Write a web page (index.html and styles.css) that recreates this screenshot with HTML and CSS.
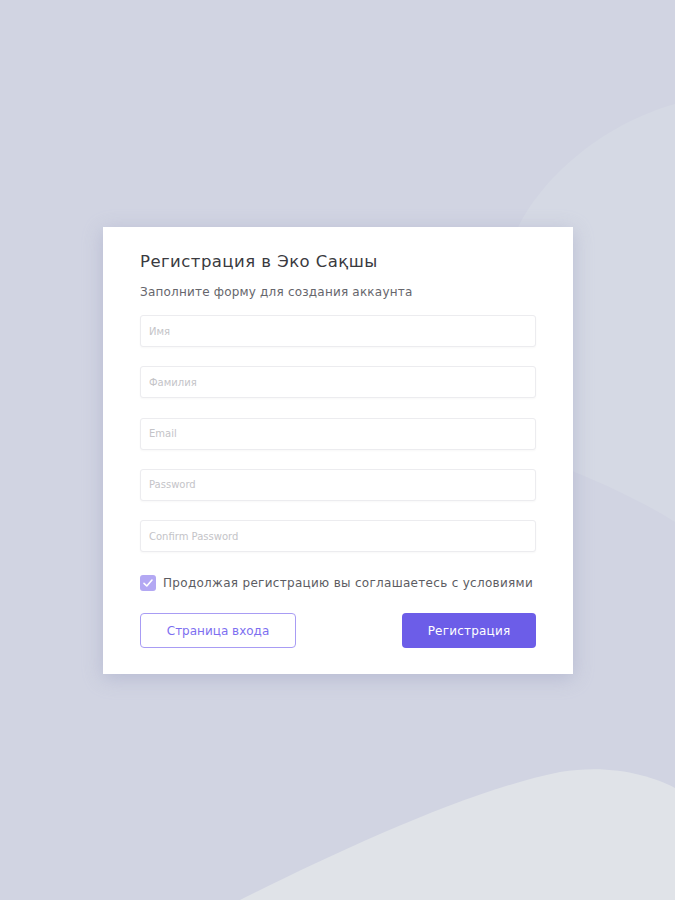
FILE: index.html
```html
<!DOCTYPE html>
<html lang="ru">
<head>
<meta charset="utf-8">
<title>Регистрация</title>
<link rel="stylesheet" href="styles.css">
</head>
<body>
<div class="page">
  <svg class="bg" viewBox="0 0 675 900" preserveAspectRatio="none" aria-hidden="true">
    <path class="blob-top" d="M517 230 C540 180 600 125 675 104 L675 522 C640 500 600 482 560 466 C520 420 500 300 517 230 Z"/>
    <path class="blob-bottom" d="M240 900 C340 850 470 790 560 772 C610 764 650 775 675 788 L675 900 Z"/>
  </svg>
  <form class="card">
    <h1 class="title">Регистрация в Эко Сақшы</h1>
    <p class="subtitle">Заполните форму для создания аккаунта</p>
    <div class="fields">
      <input class="field" type="text" placeholder="Имя">
      <input class="field" type="text" placeholder="Фамилия">
      <input class="field" type="email" placeholder="Email">
      <input class="field" type="password" placeholder="Password">
      <input class="field" type="password" placeholder="Confirm Password">
    </div>
    <label class="agree">
      <span class="check"><svg viewBox="0 0 16 16" width="16" height="16"><path d="M4 8.3 L6.8 11 L12 5" fill="none" stroke="#fff" stroke-width="1.6" stroke-linecap="round" stroke-linejoin="round"/></svg></span>
      <span class="agree-text">Продолжая регистрацию вы соглашаетесь с условиями</span>
    </label>
    <div class="actions">
      <button type="button" class="btn btn-outline">Страница входа</button>
      <button type="button" class="btn btn-primary">Регистрация</button>
    </div>
  </form>
</div>
</body>
</html>
```
FILE: styles.css
```css
* { box-sizing: border-box; }
html, body { margin: 0; padding: 0; }
body {
  width: 675px;
  height: 900px;
  overflow: hidden;
  background: #d1d4e2;
  font-family: "DejaVu Sans", "Noto Sans", sans-serif;
}
.page {
  position: relative;
  width: 675px;
  height: 900px;
  display: flex;
  justify-content: center;
  padding-top: 227px;
  padding-left: 1px;
}
.bg {
  position: absolute;
  left: 0;
  top: 0;
  width: 675px;
  height: 900px;
}
.blob-top { fill: #d5d9e4; }
.blob-bottom { fill: #e0e3e8; }
.card {
  position: relative;
  width: 470px;
  height: 447px;
  background: #fff;
  box-shadow: 0 4px 18px rgba(150, 155, 190, 0.45);
  padding: 24px 37px 0 37px;
  display: flex;
  flex-direction: column;
}
.title {
  margin: 0;
  font-size: 16.5px;
  font-weight: 400;
  color: #3a3a40;
  line-height: 21px;
  letter-spacing: 0.45px;
}
.subtitle {
  margin: 12px 0 0 0;
  font-size: 12px;
  color: #66666c;
  line-height: 16px;
  letter-spacing: 0.2px;
}
.fields {
  display: flex;
  flex-direction: column;
  gap: 19.25px;
  margin-top: 15px;
}
.field {
  width: 396px;
  height: 32px;
  border: 1px solid #ececef;
  border-radius: 3px;
  padding: 0 8px;
  font-family: inherit;
  font-size: 10px;
  color: #444;
  background: #fff;
  outline: none;
  box-shadow: 0 1px 2px rgba(0,0,0,0.03);
}
.field::placeholder { color: #c4c4c8; }
.agree {
  display: flex;
  align-items: center;
  gap: 7px;
  margin-top: 23px;
}
.check {
  width: 16px;
  height: 16px;
  border-radius: 3px;
  background: #b3a8f3;
  display: flex;
}
.agree-text {
  font-size: 12px;
  color: #5c5c62;
  letter-spacing: 0.3px;
}
.actions {
  display: flex;
  justify-content: space-between;
  margin-top: 22px;
}
.btn {
  height: 35px;
  border-radius: 4px;
  font-family: inherit;
  font-size: 12px;
  cursor: pointer;
}
.btn-outline {
  width: 156px;
  background: #fff;
  border: 1px solid #a89cf4;
  color: #7d6ff0;
}
.btn-primary {
  width: 134px;
  background: #6c5de8;
  border: none;
  color: #fff;
  letter-spacing: 0.2px;
}
```
